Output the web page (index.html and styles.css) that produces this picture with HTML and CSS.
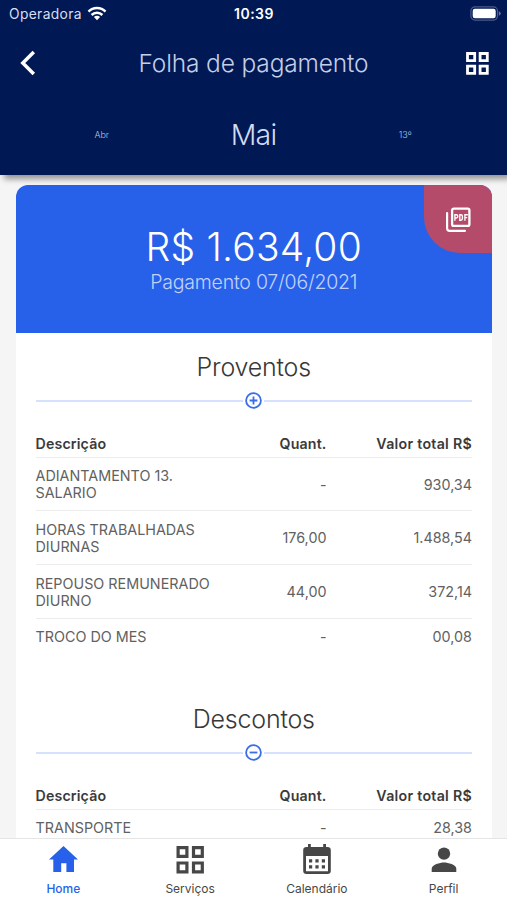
FILE: index.html
```html
<!DOCTYPE html>
<html lang="pt-BR">
<head>
<meta charset="utf-8">
<title>Folha de pagamento</title>
<link rel="stylesheet" href="styles.css">
</head>
<body>
<div class="app">
  <header class="header">
    <div class="status">
      <div class="carrier"><span>Operadora</span>
        <svg width="20" height="15" viewBox="0 0 20 15"><g fill="none" stroke="#fff" stroke-width="2.5"><path d="M1.5 5.6a12 12 0 0 1 17 0"/><path d="M4.6 9a7.6 7.6 0 0 1 10.8 0"/></g><path d="M10 14.2 6.9 11.1a4.4 4.4 0 0 1 6.2 0z" fill="#fff"/></svg>
      </div>
      <span class="clock">10:39</span>
      <svg class="battery" width="31" height="15" viewBox="0 0 31 15"><rect x=".9" y=".9" width="26.6" height="13.2" rx="4" fill="none" stroke="#4d5a88" stroke-width="1.2"/><rect x="2.7" y="2.7" width="23" height="9.6" rx="2.2" fill="#fff"/><path d="M28.8 5.2q2 .7 2 2.3t-2 2.3z" fill="#65719a"/></svg>
    </div>
    <div class="titlebar">
      <svg width="16" height="26" viewBox="0 0 16 26"><path d="M13.8 2 2.8 13l11 11" fill="none" stroke="#fff" stroke-width="3.5"/></svg>
      <h1>Folha de pagamento</h1>
      <svg class="grid-icon" width="23" height="23" viewBox="0 0 23 23"><path d="M1.5 1.5h7.2v7.2h-7.2zM14.1 1.5h7.2v7.2h-7.2zM1.5 14.1h7.2v7.2h-7.2zM14.1 14.1h7.2v7.2h-7.2z" fill="none" stroke="#fff" stroke-width="2.8"/></svg>
    </div>
    <div class="months"><span class="side">Abr</span><span class="current">Mai</span><span class="side">13º</span></div>
  </header>

  <main class="content">
    <article class="card">
      <div class="summary">
        <div class="amount">R$ 1.634,00</div>
        <div class="paydate">Pagamento 07/06/2021</div>
        <div class="pdf">
          <svg width="26" height="26" viewBox="0 0 26 26"><path d="M2.1 6v15.2q0 2.6 2.6 2.6H20" fill="none" stroke="#fff" stroke-width="2.2" stroke-linecap="round"/><rect x="7.1" y="1.6" width="17.3" height="17.3" rx="1.7" fill="none" stroke="#fff" stroke-width="2.3"/><path d="M9.9 13.8V7.7h1.3a1.4 1.4 0 0 1 0 3.3H9.9M14.8 7.7h1a1.6 1.6 0 0 1 1.6 1.6v2.3a1.6 1.6 0 0 1-1.6 1.6h-1zM19.9 13.8V7.7h2.9M19.9 10.6h2.3" fill="none" stroke="#fff" stroke-width="1.35"/></svg>
        </div>
      </div>

      <section class="section">
        <h2>Proventos</h2>
        <div class="divider"><svg width="17" height="17" viewBox="0 0 17 17"><circle cx="8.5" cy="8.5" r="7.4"/><path d="M4.6 8.5h7.8M8.5 4.6v7.8"/></svg></div>
        <div class="row head"><span>Descrição</span><span>Quant.</span><span>Valor total R$</span></div>
        <div class="row"><span>ADIANTAMENTO 13.<br>SALARIO</span><span>-</span><span>930,34</span></div>
        <div class="row"><span>HORAS TRABALHADAS<br>DIURNAS</span><span>176,00</span><span>1.488,54</span></div>
        <div class="row"><span>REPOUSO REMUNERADO<br>DIURNO</span><span>44,00</span><span>372,14</span></div>
        <div class="row"><span>TROCO DO MES</span><span>-</span><span>00,08</span></div>
      </section>

      <section class="section">
        <h2>Descontos</h2>
        <div class="divider"><svg width="17" height="17" viewBox="0 0 17 17"><circle cx="8.5" cy="8.5" r="7.4"/><path d="M4.6 8.5h7.8"/></svg></div>
        <div class="row head"><span>Descrição</span><span>Quant.</span><span>Valor total R$</span></div>
        <div class="row"><span>TRANSPORTE</span><span>-</span><span>28,38</span></div>
      </section>
    </article>
  </main>

  <nav class="tabs">
    <a class="tab active"><svg width="30" height="30" viewBox="0 0 30 30"><path d="M15.5 1 30 14.4h-4V27h-7.6v-8.8h-5.2V27H5.3V14.4H1z" fill="currentColor"/></svg><span>Home</span></a>
    <a class="tab"><svg width="30" height="30" viewBox="0 0 30 30"><path d="M3.1 2.6h8.8v8.8h-8.8zM18.5 2.6h8.8v8.8h-8.8zM3.1 18h8.8v8.8h-8.8zM18.5 18h8.8v8.8h-8.8z" fill="none" stroke="currentColor" stroke-width="3.2"/></svg><span>Serviços</span></a>
    <a class="tab"><svg width="30" height="32" viewBox="0 0 30 32"><path fill="currentColor" fill-rule="evenodd" d="M6 1h2.8v3h12.4V1H24v3h1.5A3.3 3.3 0 0 1 28.8 7.3v20.4a3.3 3.3 0 0 1-3.3 3.3h-21a3.3 3.3 0 0 1-3.3-3.3V7.3A3.3 3.3 0 0 1 4.5 4H6zM4 13v15.3h22V13zM7 16.3h3.2v3.2H7zm6.4 0h3.2v3.2h-3.2zm6.4 0H23v3.2h-3.2zM7 22.3h3.2v3.2H7zm6.4 0h3.2v3.2h-3.2zm6.4 0H23v3.2h-3.2z"/></svg><span>Calendário</span></a>
    <a class="tab"><svg width="30" height="30" viewBox="0 0 30 30"><g fill="currentColor"><circle cx="15" cy="8.6" r="6.2"/><path d="M2.7 27v-3.3c0-4 8.2-6.2 12.3-6.2s12.3 2.2 12.3 6.2V27z"/></g></svg><span>Perfil</span></a>
  </nav>
</div>
</body>
</html>
```

FILE: styles.css
```css
* { box-sizing: border-box; }
body { margin: 0; font-family: Inter, "Liberation Sans", sans-serif; background: #f5f5f5; }
svg { display: block; flex: none; }
h1, h2 { margin: 0; font-weight: 300; }
.app { width: 507px; height: 900px; display: flex; flex-direction: column; overflow: hidden; }

.header { flex: none; height: 175px; background: #001854; color: #fff; box-shadow: 4px 4px 6px rgba(0, 0, 0, .4); z-index: 1; }
.status { height: 28px; padding: 0 6px 1px 7px; display: grid; grid-template-columns: 1fr auto 1fr; align-items: center; }
.carrier { display: flex; align-items: center; gap: 5px; padding-left: 2px; font-size: 13.8px; letter-spacing: .35px; color: #d8deef; }
.clock { font-size: 14px; font-weight: 600; letter-spacing: .5px; }
.battery { justify-self: end; margin-top: -1px; }
.titlebar { height: 70px; padding: 0 18px 0 20px; display: grid; grid-template-columns: 1fr auto 1fr; align-items: center; }
.grid-icon { justify-self: end; }
h1 { margin: 0 1px 0 -1px; font-size: 24.5px; letter-spacing: -.15px; color: #c4cee6; }
.months { height: 73px; display: grid; grid-template-columns: 1fr 100px 1fr; align-items: center; text-align: center; }
.side { font-size: 9px; font-weight: 300; color: #b8c4df; }
.current { font-size: 28.5px; font-weight: 300; letter-spacing: -.9px; color: #d3dcef; }

.content { flex: 1; min-height: 0; padding: 10px 15px 0 15.5px; overflow: hidden; }
.card { height: 800px; border-radius: 12px 12px 0 0; background: #fff; overflow: hidden; }
.summary { position: relative; height: 147.5px; padding-top: 39px; background: #2861e9; text-align: center; }
.amount { height: 46px; line-height: 46px; font-size: 39px; font-weight: 300; letter-spacing: .2px; color: #fff; }
.paydate { line-height: 24px; font-size: 19.5px; font-weight: 300; letter-spacing: -.23px; color: #c0d2fb; }
.pdf { position: absolute; top: 0; right: 0; width: 68px; height: 68px; padding-top: 1px; display: flex; align-items: center; justify-content: center; border-bottom-left-radius: 36px; background: #b54b6b; }

.section { height: 352px; padding: 18.5px 20px 0; }
h2 { height: 32px; line-height: 32px; font-size: 25px; letter-spacing: -.2px; color: #383838; text-align: center; }
.divider { height: 17px; margin: 9px 0 20.5px; display: flex; align-items: center; gap: 2px; }
.divider::before, .divider::after { content: ""; flex: 1; height: 2px; background: #d5e1fd; }
.divider circle, .divider path { fill: none; stroke: #3a6ee6; stroke-width: 1.8; }
.row { display: grid; grid-template-columns: 200px 91px 1fr; align-items: center; padding: 9.6px 0 9.2px; border-bottom: 1px solid #ececec; font-size: 14.35px; line-height: 17px; color: #616161; }
.row:last-child { border-bottom: 0; }
.row span + span { text-align: right; }
.head { padding: 5px 0; font-size: 14.2px; font-weight: 600; letter-spacing: .15px; color: #3a3a3a; }
.head span:last-child { letter-spacing: .28px; }

.tabs { flex: none; height: 62px; border-top: 1px solid #e5e5e5; background: #fff; display: grid; grid-template-columns: repeat(4, 1fr); z-index: 1; }
.tab { display: flex; flex-direction: column; align-items: center; justify-content: flex-end; padding-bottom: 4px; color: #474747; font-size: 12px; line-height: 15px; }
.tab svg { margin-bottom: 6px; }
.active { color: #2861e9; font-weight: 500; }
```
